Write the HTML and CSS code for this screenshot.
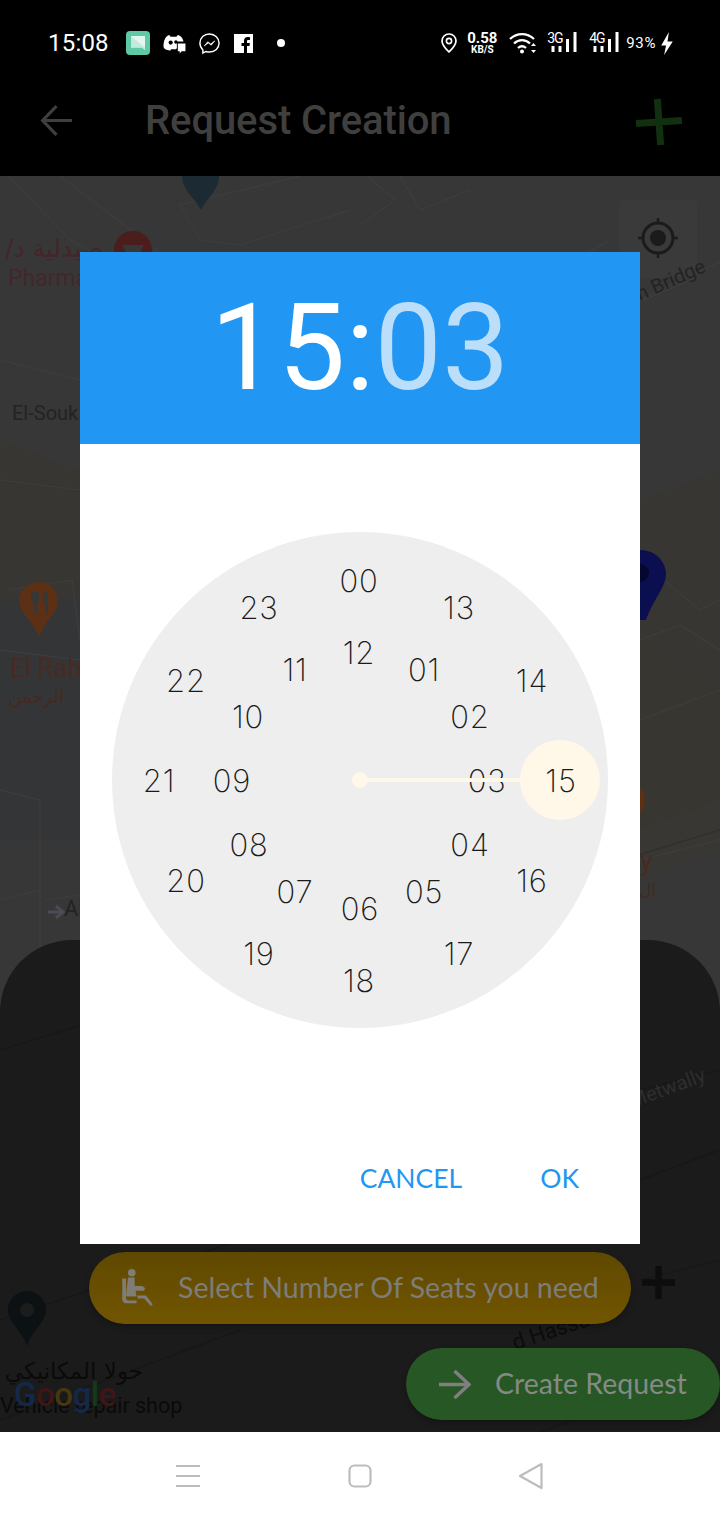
FILE: index.html
```html
<!DOCTYPE html>
<html lang="en">
<head>
<meta charset="utf-8">
<title>Request Creation</title>
<link rel="stylesheet" href="styles.css">
</head>
<body>
<div class="phone">
  <header class="top">
    <div class="status">
      <span class="clock">15:08</span>
      <div class="status-left">
        <svg class="ic-msg" viewBox="0 0 24 24"><rect width="24" height="24" rx="4" fill="#5fc9a5"/><path d="M5 5h14v14l-3-2.500H5z" fill="#e4f6ef"/><path d="M5 5l14 11.500V19l-3-2.500H5z" fill="#c3ebdd"/></svg>
        <svg class="ic-disc" viewBox="0 0 24 22"><path d="M1 14C1 8 3 3 7 2l1.500 2h6L16 2c3 .6 5 3 6 7h-7v7l-1 1H9l-1 1.500C4 18 1 17 1 14z" fill="#fff"/><circle cx="8.500" cy="10" r="2.200" fill="#000"/><circle cx="14" cy="9.500" r="1.800" fill="#000"/><path d="M16 11h8v8h-4l-2 2.500V19h-2z" fill="#fff"/></svg>
        <svg class="ic-mess" viewBox="0 0 24 24"><path d="M12 2C6.300 2 2 6.100 2 11.600c0 2.900 1.200 5.400 3.100 7.100V22l3.100-1.700c1.200.4 2.500.6 3.800.6 5.700 0 10-4.100 10-9.300S17.700 2 12 2z" fill="none" stroke="#fff" stroke-width="1.500"/><path d="M6.500 14.500l3.700-4.300 3 2.300 4.300-3.200-3.700 4.400-3-2.300z" fill="#fff" stroke="#fff" stroke-width=".7"/></svg>
        <svg class="ic-fb" viewBox="0 0 19 19"><path d="M0 0h19v19h-6v-7h2.500l.4-3H13V7.400c0-.9.300-1.400 1.400-1.400H16V3.300c-.5-.1-1.300-.2-2.300-.2C11.500 3.100 10 4.400 10 6.900V9H7.500v3H10v7H0z" fill="#fff"/></svg>
        <span class="dot"></span>
      </div>
      <div class="status-right">
        <svg class="ic-pin" viewBox="0 0 16 20"><path d="M8 1C4 1 1 4 1 8c0 4.500 5 9 7 11 2-2 7-6.500 7-11 0-4-3-7-7-7z" fill="none" stroke="#fff" stroke-width="1.700"/><circle cx="8" cy="8" r="2.600" fill="none" stroke="#fff" stroke-width="1.600"/></svg>
        <div class="speed"><b>0.58</b><b class="unit">KB/S</b></div>
        <svg class="ic-wifi" viewBox="0 0 28 22"><path d="M1 7c7-6.500 17-6.500 24 0M5 11.500c4.800-4.500 11.200-4.500 16 0M9 16c2.800-2.500 5.200-2.500 8 0" fill="none" stroke="#fff" stroke-width="2.300"/><circle cx="13" cy="19.500" r="2" fill="#fff"/><path d="M24.500 11l2.500 3h-5zM24.500 21l2.500-3h-5z" fill="#fff"/></svg>
        <div class="net"><span>3G</span><svg class="bars" viewBox="0 0 26 20"><path d="M2 14v6M9 14v6M16.500 7v13M24 0v20" stroke="#fff" stroke-width="3"/></svg></div>
        <div class="net net2"><span>4G</span><svg class="bars" viewBox="0 0 26 20"><path d="M2 14v6M9 14v6M16.500 7v13M24 0v20" stroke="#fff" stroke-width="3"/></svg></div>
        <span class="batt">93%</span>
        <svg class="ic-bolt" viewBox="0 0 14 24"><path d="M9 0L1 14h5l-2 10 9-14H7.500z" fill="#fff"/></svg>
      </div>
    </div>
    <div class="appbar">
      <svg class="ic-back" viewBox="0 0 32 32"><path d="M31 16H3M16 2L2.500 16 16 30" fill="none" stroke="#3f3f3f" stroke-width="3"/></svg>
      <h1 class="title">Request Creation</h1>
      <svg class="ic-plus" viewBox="0 0 50 50"><g transform="rotate(-4 25 25)"><path d="M25 2v46M2 25h46" stroke="#11300f" stroke-width="7"/></g></svg>
    </div>
  </header>

  <main class="map">
    <svg class="map-art" viewBox="0 176 720 1256" preserveAspectRatio="none">
      <rect x="0" y="176" width="720" height="1256" fill="#373737"/>
      <path d="M0 440L80 470V650H0zM640 500L720 470V800L640 830z" fill="#38362f" opacity=".45"/>
      <path d="M0 600H80V840H0z" fill="#343537"/>
      <path d="M640 640L720 690V850L640 880z" fill="#39372f" opacity=".4"/>
      <g fill="none" stroke="#3c3c3c" stroke-width="1.500">
        <path d="M60 176L170 260M8 176L70 240L160 290M300 176L180 205L200 240L240 245L350 210"/>
        <path d="M400 176L420 210L470 190M360 225L395 200L360 170M500 300L610 240"/>
        <path d="M0 360L80 380M0 480L80 490M0 650L80 660M0 900L40 890V1000"/>
        <path d="M640 640L680 625L720 650M640 560L700 610L720 600M640 860L720 840M640 720L720 690"/>
        <path d="M8 590L72 580L80 640M45 900L80 895M0 790L40 800L40 900"/>
        <path d="M0 1050L720 830M0 1320L240 1240M0 1420L240 1330M640 1180L720 1150M640 1090L720 1070M640 1280L720 1260M540 1432L720 1370" stroke="#303030"/>
        <path d="M700 276L620 310M720 262L640 300"/>
      </g>
      <rect x="619" y="200" width="78" height="78" rx="4" fill="#3a3a3a"/>
      <circle cx="658" cy="238" r="15" fill="none" stroke="#1b1b1b" stroke-width="3"/>
      <circle cx="658" cy="238" r="8" fill="#1b1b1b"/>
      <path d="M658 218v6M658 252v6M638 238h6M672 238h6" stroke="#1b1b1b" stroke-width="2.500"/>
      <path d="M182 176h37c0 14-12 22-18 34-6-12-19-20-19-34z" fill="#1c2b33"/>
      <text class="lbl" transform="rotate(-24 640 301)" x="640" y="301" fill="#232323" font-size="20">n Bridge</text>
      <circle cx="133" cy="250" r="19" fill="#4b1d1d"/>
      <path d="M122 245h22l-7 13h-8z" fill="#373737"/>
      <text class="lbl-ar" x="103" y="257" direction="rtl" fill="#43252a" font-size="25">صيدلية د/</text>
      <text class="lbl" x="8" y="286" fill="#43272a" font-size="23">Pharma</text>
      <text class="lbl" x="12" y="420" fill="#232323" font-size="20">El-Souk</text>
      <path d="M39 582c-11 0-20 9-20 19 0 12 14 19 20 36 6-17 19-24 19-36 0-10-8-19-19-19z" fill="#5c3015"/>
      <path d="M31 592v10h3v12h3v-12h2v-10M46 592c-4 2-4 10-1 13v9h3v-22z" fill="#373737"/>
      <text class="lbl" x="10" y="677" fill="#4a2a20" font-size="26">El Rah</text>
      <text class="lbl-ar" x="64" y="703" direction="rtl" fill="#45291f" font-size="18">الرحمن</text>
      <path d="M48 912h14M56 906l7 6-7 6" stroke="#4a4d55" stroke-width="3" fill="none"/>
      <text class="lbl" x="64" y="916" fill="#232323" font-size="22">Al</text>
      <path d="M640 550c16 0 26 12 26 24 0 13-12 24-20 46h-6z" fill="#0b0f50"/>
      <circle cx="640" cy="573" r="9" fill="#050730"/>
      <circle cx="625" cy="800" r="20" fill="#5c3015"/>
      <text class="lbl" x="640" y="870" fill="#48291f" font-size="27">y</text>
      <text class="lbl-ar" x="656" y="896" direction="rtl" fill="#43291f" font-size="17">ال</text>
    </svg>

    <section class="sheet">
      <svg class="sheet-art" viewBox="0 940 720 492">
        <text class="lbl" transform="rotate(-20 632 1108)" x="632" y="1108" fill="#2e2e2e" font-size="20">Metwally</text>
        <text class="lbl" transform="rotate(-18 515 1350)" x="515" y="1350" fill="#0c0c0c" font-size="22">d Hassan</text>
        <path d="M27 1291c-11 0-19 9-19 19 0 12 13 19 19 36 6-17 19-24 19-36 0-10-8-19-19-19z" fill="#0c1113"/>
        <circle cx="27" cy="1310" r="7" fill="#1b1c1c"/>
        <text class="lbl-ar" x="143" y="1379" direction="rtl" fill="#0a0a0a" font-size="23">حولا المكانيكي</text>
        <text class="lbl" x="0" y="1413" fill="#0a0a0a" font-size="21.500">Vehicle repair shop</text>
        <text class="google" x="14" y="1406" font-size="33"><tspan fill="#14284a">G</tspan><tspan fill="#3f1515">o</tspan><tspan fill="#46380e">o</tspan><tspan fill="#14284a">g</tspan><tspan fill="#143a18">l</tspan><tspan fill="#3f1515">e</tspan></text>
      </svg>
      <div class="seat-row">
        <button class="pill pill-seat">
          <svg class="ic-seat" viewBox="0 0 34 42"><circle cx="11" cy="5" r="4" fill="#7f7d75"/><path d="M1 11v22c0 2 2 4 4 4h11v-3H7c-1 0-2-1-2-2V11z" fill="#7f7d75"/><path d="M7 10h7v9h8l3 2-1 3h-9l1 6h-9c-1 0-2-1-2-2z" fill="#7f7d75"/><path d="M17 29h9l7 9-2 2-7-8h-7z" fill="#7f7d75"/></svg>
          <span class="pill-text">Select Number Of Seats you need</span>
        </button>
        <svg class="ic-add" viewBox="0 0 36 36"><path d="M18 1v34M1 18h34" stroke="#0d0d0d" stroke-width="6.500"/></svg>
      </div>
      <div class="create-row">
        <button class="pill pill-create">
          <svg class="ic-next" viewBox="0 0 34 34"><path d="M1 17h30M17 3l15 14-15 14" fill="none" stroke="#7f7f7f" stroke-width="3.500"/></svg>
          <span class="pill-text">Create Request</span>
        </button>
      </div>
    </section>
  </main>

  <nav class="navbar">
    <svg class="nav-menu" viewBox="0 0 26 24"><path d="M1 2h24M1 12h24M1 22h24" stroke="#bdbdbd" stroke-width="2.200"/></svg>
    <svg class="nav-home" viewBox="0 0 24 24"><rect x="1.500" y="1.500" width="21" height="21" rx="5" fill="none" stroke="#bdbdbd" stroke-width="2.200"/></svg>
    <svg class="nav-back" viewBox="0 0 26 28"><path d="M23.500 2L2 14l21.500 12z" fill="none" stroke="#bdbdbd" stroke-width="2.200" stroke-linejoin="round"/></svg>
  </nav>

  <div class="overlay">
    <div class="dialog">
      <div class="dlg-head"><span class="h-hour">15:</span><span class="h-min">03</span></div>
      <div class="dlg-body">
        <div class="dial">
          <span class="num" style="left:247px;top:48px">00</span>
          <span class="num" style="left:347px;top:75px">13</span>
          <span class="num" style="left:420px;top:148px">14</span>
          <span class="num" style="left:420px;top:348px">16</span>
          <span class="num" style="left:347px;top:421px">17</span>
          <span class="num" style="left:247px;top:448px">18</span>
          <span class="num" style="left:147px;top:421px">19</span>
          <span class="num" style="left:74px;top:348px">20</span>
          <span class="num" style="left:47px;top:248px">21</span>
          <span class="num" style="left:74px;top:148px">22</span>
          <span class="num" style="left:147px;top:75px">23</span>
          <span class="num" style="left:247px;top:120px">12</span>
          <span class="num" style="left:312px;top:137px">01</span>
          <span class="num" style="left:358px;top:184px">02</span>
          <span class="num" style="left:375px;top:248px">03</span>
          <span class="num" style="left:358px;top:312px">04</span>
          <span class="num" style="left:312px;top:359px">05</span>
          <span class="num" style="left:248px;top:376px">06</span>
          <span class="num" style="left:183px;top:359px">07</span>
          <span class="num" style="left:137px;top:312px">08</span>
          <span class="num" style="left:120px;top:248px">09</span>
          <span class="num" style="left:136px;top:184px">10</span>
          <span class="num" style="left:183px;top:137px">11</span>
          <span class="hand"></span>
          <span class="hub"></span>
          <span class="sel"></span>
          <span class="num" style="left:449px;top:248px">15</span>
        </div>
        <div class="actions">
          <button class="act act-cancel">CANCEL</button>
          <button class="act act-ok">OK</button>
        </div>
      </div>
    </div>
  </div>
</div>
</body>
</html>
```

FILE: styles.css
```css
* { box-sizing: border-box; }
html, body { margin: 0; padding: 0; }
body { background: #000; font-family: "Roboto", "Liberation Sans", sans-serif; }
button { border: 0; background: none; padding: 0; font: inherit; }

.phone { position: relative; width: 720px; height: 1520px; display: flex; flex-direction: column; overflow: hidden; }

.top { height: 176px; background: #000; flex: none; }
.status { height: 88px; padding: 0 46px 2px 48px; display: flex; align-items: center; color: #fff; }
.clock { font-size: 24px; width: 78px; letter-spacing: .2px; }
.status-left { display: flex; align-items: center; }
.ic-msg { width: 24px; height: 24px; margin-right: 12px; }
.ic-disc { width: 24px; height: 21px; margin-right: 12px; }
.ic-mess { width: 23px; height: 23px; margin-right: 13px; }
.ic-fb { width: 19px; height: 19px; margin-right: 24px; }
.dot { width: 8px; height: 8px; border-radius: 50%; background: #fff; }
.status-right { margin-left: auto; display: flex; align-items: center; }
.ic-pin { width: 16px; height: 20px; margin-right: 9px; }
.speed { display: flex; flex-direction: column; align-items: center; width: 32px; margin-right: 11px; line-height: 1; }
.speed b { font-size: 15px; line-height: 14px; font-weight: 700; }
.speed .unit { font-size: 10px; line-height: 10px; }
.ic-wifi { width: 28px; height: 22px; margin-right: 10px; }
.net { position: relative; width: 30px; height: 22px; margin-right: 12px; }
.net span { position: absolute; left: 0; top: -1px; font-size: 14px; line-height: 14px; letter-spacing: -1.2px; }
.bars { position: absolute; right: 0; top: 0; width: 26px; height: 20px; }
.net2 { margin-right: 7px; }
.batt { font-size: 15px; margin-right: 4px; letter-spacing: .6px; }
.ic-bolt { width: 14px; height: 23px; }

.appbar { height: 72px; display: flex; align-items: center; padding: 0 36px 0 40px; margin-top: -4px; }
.ic-back { width: 33px; height: 33px; flex: none; }
.title { margin: 2px 0 0 72px; color: #3f3f3f; font-size: 40px; font-weight: 500; line-height: 1; letter-spacing: -.1px; }
.ic-plus { width: 50px; height: 50px; margin: 4px 0 0 auto; }

.map { position: relative; flex: 1; display: flex; flex-direction: column; justify-content: flex-end; overflow: hidden; background: #373737; }
.map-art { position: absolute; left: 0; top: 0; width: 720px; height: 1256px; }
.lbl { font-family: "Roboto", sans-serif; }
.lbl-ar { font-family: "DejaVu Sans", sans-serif; }
.google { font-family: "Roboto", sans-serif; font-weight: 500; letter-spacing: -.5px; }

.sheet { position: relative; height: 492px; background: rgba(0, 0, 0, .51); border-radius: 72px 72px 0 0; overflow: hidden; padding: 312px 0 0 89px; }
.sheet-art { position: absolute; left: 0; top: 0; width: 720px; height: 492px; }
.seat-row { position: relative; display: flex; align-items: center; }
.pill { height: 72px; border-radius: 36px; display: flex; align-items: center; font-family: "Lato", sans-serif; font-size: 28.500px; color: #7d7d79; box-shadow: 0 3px 6px rgba(0, 0, 0, .25); }
.pill-text { padding-bottom: 3px; }
.pill-seat { width: 542px; padding-left: 32px; background: linear-gradient(#5f4800, #715500); }
.ic-seat { width: 33px; height: 40px; margin-right: 24px; }
.ic-add { width: 35px; height: 35px; margin: 0 0 0 10px; transform: translateY(-6px); }
.create-row { position: relative; display: flex; justify-content: flex-end; margin: 24px 0 0; }
.pill-create { width: 314px; padding-left: 32px; background: #285726; color: #858a85; }
.ic-next { width: 33px; height: 33px; margin-right: 24px; }

.navbar { height: 88px; flex: none; background: #fff; display: flex; align-items: center; padding: 0 0 1px 175px; }
.nav-menu { width: 26px; height: 24px; }
.nav-home { width: 24px; height: 24px; margin-left: 147px; }
.nav-back { width: 26px; height: 28px; margin-left: 146px; }

.overlay { position: absolute; left: 0; top: 252px; width: 720px; display: flex; justify-content: center; }
.dialog { width: 560px; height: 992px; background: #fff; display: flex; flex-direction: column; }
.dlg-head { height: 192px; background: #2196f3; display: flex; align-items: center; justify-content: center; font-size: 120px; line-height: 1; color: #fff; }
.h-min { color: #bbdefb; }
.dlg-body { flex: 1; padding-top: 88px; position: relative; display: flex; flex-direction: column; align-items: center; }
.dial { position: relative; width: 496px; height: 496px; border-radius: 50%; background: #eee; }
.num { position: absolute; transform: translate(-50%, -50%); font-family: "Inter", sans-serif; font-weight: 250; font-size: 31px; line-height: 1; letter-spacing: .8px; color: #1a1a1a; }
.hand { position: absolute; left: 248px; top: 246px; width: 200px; height: 4px; background: #fff8e9; }
.hub { position: absolute; left: 240px; top: 240px; width: 16px; height: 16px; border-radius: 50%; background: #fff8e9; }
.sel { position: absolute; left: 408px; top: 208px; width: 80px; height: 80px; border-radius: 50%; background: #fff8e9; }
.actions { margin-top: auto; width: 100%; height: 132px; display: flex; justify-content: flex-end; align-items: center; padding: 0 61px 0 0; }
.act { font-family: "Lato", sans-serif; font-size: 26.500px; color: #2196f3; }
.act-ok { margin-left: 78px; }
```
